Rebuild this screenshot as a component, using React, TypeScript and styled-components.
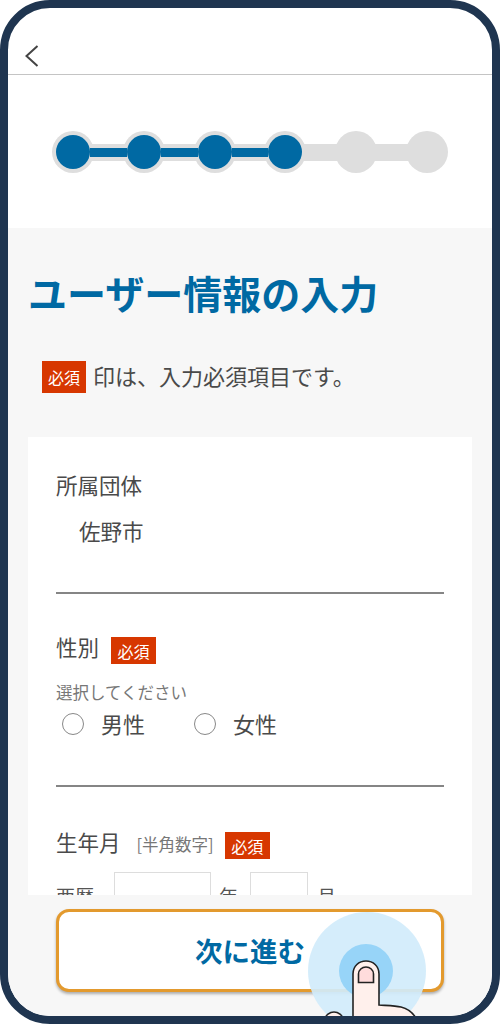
import React from 'react';
import styled, { createGlobalStyle } from 'styled-components';

const STEP_COUNT = 6;
const DONE_STEPS = 4;

const RequiredBadge = ({ large = false }: { large?: boolean }) => <Badge $large={large}>必須</Badge>;

const Radio = ({ label }: { label: string }) => (
  <RadioLabel>
    <RadioMark />
    <span>{label}</span>
  </RadioLabel>
);

const Stepper = () => (
  <StepTrack>
    {Array.from({ length: STEP_COUNT }).map((_, index) => (
      <React.Fragment key={index}>
        {index > 0 && (
          <Connector>
            <ConnectorFill $done={index < DONE_STEPS} />
          </Connector>
        )}
        <Step>
          <StepCore $done={index < DONE_STEPS} />
        </Step>
      </React.Fragment>
    ))}
  </StepTrack>
);

const App = () => (
  <>
    <GlobalStyle />
    <Frame>
      <Header>
        <svg width="16" height="24" viewBox="0 0 16 24" fill="none">
          <path d="M13.5 2 L2.5 12 L13.5 22" stroke="#444" strokeWidth="2" />
        </svg>
      </Header>
      <StepSection>
        <Stepper />
      </StepSection>
      <Content>
        <Title>ユーザー情報の入力</Title>
        <Note>
          <RequiredBadge large />
          <NoteText>印は、入力必須項目です。</NoteText>
        </Note>
        <Card>
          <Field $height={125} $gap={39}>
            <FieldLabel>所属団体</FieldLabel>
            <StaticValue>佐野市</StaticValue>
          </Field>
          <Field $height={154} $gap={41}>
            <LabelRow>
              <FieldLabel>性別</FieldLabel>
              <RequiredBadge />
            </LabelRow>
            <Hint>選択してください</Hint>
            <RadioRow>
              <Radio label="男性" />
              <Radio label="女性" />
            </RadioRow>
          </Field>
          <BirthField>
            <LabelRow>
              <FieldLabel>生年月</FieldLabel>
              <SubLabel>[半角数字]</SubLabel>
              <RequiredBadge />
            </LabelRow>
            <DateRow>
              <DateText>西暦</DateText>
              <DateInput $width={97} />
              <DateText>年</DateText>
              <DateInput $width={58} />
              <DateText>月</DateText>
            </DateRow>
          </BirthField>
        </Card>
      </Content>
      <Footer>
        <NextButton>次に進む</NextButton>
      </Footer>
      <TapHint>
        <TapCore />
        <svg width="120" height="60" viewBox="0 0 120 60" fill="none">
          <path
            d="M23 60 C23 55 28 52 32 52 C36 52 41 55 41 60 Z"
            fill="#fff0ec"
            stroke="#222"
            strokeWidth="1.6"
          />
          <path
            d="M51 60 V14 C51 6 57 1 64 1 C71 1 77 6 77 14 V45 C84 45.500 93 45.500 99 47 C107 49 112 54 115 60 Z"
            fill="#fff0ec"
            stroke="#222"
            strokeWidth="1.6"
          />
          <path
            d="M56.500 22.500 V14 C56.500 10 60 7 64 7 C68 7 71.500 10 71.500 14 V22.500 Z"
            fill="#ffdcdc"
            stroke="#222"
            strokeWidth="1.6"
          />
        </svg>
      </TapHint>
    </Frame>
  </>
);

export default App;

const GlobalStyle = createGlobalStyle`
  html, body {
    margin: 0;
    padding: 0;
    background: #fff;
  }

  * {
    box-sizing: border-box;
  }

  body {
    font-family: "Noto Sans CJK JP", "Noto Sans", sans-serif;
    color: #4a4a4a;
  }
`;

const Frame = styled.div`
  position: relative;
  display: flex;
  flex-direction: column;
  width: 500px;
  height: 1024px;
  border: 8px solid #1f3550;
  border-radius: 50px;
  background: #fff;
  overflow: hidden;
`;

const Header = styled.header`
  display: flex;
  align-items: flex-end;
  flex: none;
  height: 67px;
  padding: 0 0 6px 16px;
  border-bottom: 1px solid #c4c4c4;
`;

const StepSection = styled.section`
  flex: none;
  height: 153px;
  padding: 56px 44px 0;
`;

const StepTrack = styled.div`
  display: flex;
  align-items: center;
  width: 396px;
`;

const Step = styled.div`
  display: flex;
  align-items: center;
  justify-content: center;
  flex: none;
  width: 42px;
  height: 42px;
  border-radius: 50%;
  background: #dedede;
`;

const StepCore = styled.div<{ $done: boolean }>`
  width: 34px;
  height: 34px;
  border-radius: 50%;
  background: ${({ $done }) => ($done ? '#0069a3' : 'transparent')};
`;

const Connector = styled.div`
  position: relative;
  z-index: 1;
  display: flex;
  align-items: center;
  flex: 1;
  height: 17px;
  margin: 0 -4px;
  background: #dedede;
`;

const ConnectorFill = styled.div<{ $done: boolean }>`
  width: 100%;
  height: 9px;
  background: ${({ $done }) => ($done ? '#0069a3' : 'transparent')};
`;

const Content = styled.main`
  flex: 1;
  min-height: 0;
  padding: 0 20px;
  background: #f7f7f7;
  overflow: hidden;
`;

const Title = styled.h1`
  margin: 35px 0 0 0;
  color: #0069a3;
  font-size: 39px;
  font-weight: 700;
  line-height: 58px;
  white-space: nowrap;
`;

const Note = styled.div`
  display: flex;
  align-items: center;
  gap: 7px;
  height: 32px;
  margin: 40px 0 0 14px;
  font-size: 22px;
`;

const NoteText = styled.span`
  margin-bottom: 4px;
`;

const Badge = styled.span<{ $large: boolean }>`
  display: flex;
  align-items: center;
  justify-content: center;
  flex: none;
  width: ${({ $large }) => ($large ? '44px' : '45px')};
  height: ${({ $large }) => ($large ? '32px' : '27px')};
  margin-top: ${({ $large }) => ($large ? '0' : '3px')};
  background: #d73700;
  color: #fff;
  font-size: 16px;
`;

const Card = styled.div`
  margin-top: 44px;
  padding: 32px 28px 0;
  background: #fff;
`;

const Field = styled.div<{ $height: number; $gap: number }>`
  height: ${({ $height }) => $height}px;
  margin-bottom: ${({ $gap }) => $gap}px;
  border-bottom: 2px solid #858585;
`;

const BirthField = styled.div`
  height: 120px;
`;

const FieldLabel = styled.div`
  font-size: 21.500px;
  line-height: 32px;
`;

const StaticValue = styled.div`
  margin: 14px 0 0 23px;
  font-size: 21.500px;
  line-height: 32px;
`;

const LabelRow = styled.div`
  display: flex;
  align-items: center;
  height: 32px;

  ${FieldLabel} {
    margin: 0 12px 4px 0;
  }
`;

const SubLabel = styled.span`
  margin: 0 11px 0 4px;
  color: #777;
  font-size: 16.500px;
`;

const Hint = styled.div`
  margin-top: 15px;
  color: #777;
  font-size: 16.500px;
  line-height: 24px;
`;

const RadioRow = styled.div`
  display: flex;
  gap: 49px;
  margin: 3px 0 0 6px;
`;

const RadioLabel = styled.label`
  display: flex;
  align-items: flex-start;
  gap: 17px;
  font-size: 22px;
  line-height: 32px;
`;

const RadioMark = styled.span`
  flex: none;
  width: 22px;
  height: 22px;
  margin-top: 6px;
  border: 1.500px solid #888;
  border-radius: 50%;
`;

const DateRow = styled.div`
  display: flex;
  align-items: flex-start;
  margin-top: 12px;
`;

const DateText = styled.span`
  width: 38px;
  padding-top: 10px;
  color: #555;
  font-size: 19px;
  line-height: 28px;

  &:first-child {
    width: 58px;
  }

  &:nth-child(3) {
    width: 22px;
    margin: 0 9px 0 8px;
  }

  &:last-child {
    width: 20px;
    margin-left: 9px;
  }
`;

const DateInput = styled.div<{ $width: number }>`
  width: ${({ $width }) => $width}px;
  height: 48px;
  border: 1px solid #ddd;
  background: #fff;
`;

const Footer = styled.footer`
  flex: none;
  height: 121px;
  padding: 14px 48px 0;
  background: #f7f7f7;
`;

const NextButton = styled.button`
  display: block;
  width: 388px;
  height: 83px;
  padding: 0 0 2px;
  border: 3px solid #e39a2e;
  border-radius: 13px;
  background: #fff;
  box-shadow: 0 2px 3px rgba(0, 0, 0, 0.3);
  color: #0069a3;
  font-family: inherit;
  font-size: 27.500px;
  font-weight: 700;
`;

const TapHint = styled.div`
  position: absolute;
  left: 300px;
  top: 904px;
  width: 118px;
  height: 118px;
  border-radius: 50%;
  background: rgba(209, 235, 251, 0.92);

  svg {
    position: absolute;
    left: -6px;
    top: 48px;
    overflow: visible;
  }
`;

const TapCore = styled.div`
  position: absolute;
  left: 31px;
  top: 32px;
  width: 54px;
  height: 54px;
  border-radius: 50%;
  background: #97d4f8;
`;
